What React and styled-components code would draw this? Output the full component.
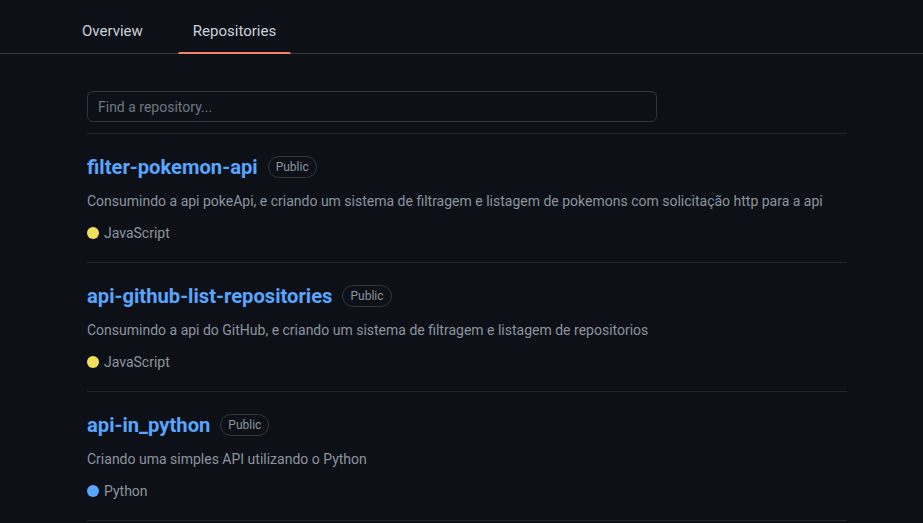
import React from "react";
import styled, { createGlobalStyle } from "styled-components";

const GlobalStyle = createGlobalStyle`
  html, body {
    margin: 0;
    padding: 0;
    background: #0d1117;
  }
  body {
    font-family: Roboto, "Liberation Sans", sans-serif;
    color: #c9d1d9;
  }
`;

const repos = [
  {
    id: 1,
    name: "filter-pokemon-api",
    desc: "Consumindo a api pokeApi, e criando um sistema de filtragem e listagem de pokemons com solicitação http para a api",
    lang: "JavaScript",
    color: "#f1e05a",
  },
  {
    id: 2,
    name: "api-github-list-repositories",
    desc: "Consumindo a api do GitHub, e criando um sistema de filtragem e listagem de repositorios",
    lang: "JavaScript",
    color: "#f1e05a",
  },
  {
    id: 3,
    name: "api-in_python",
    desc: "Criando uma simples API utilizando o Python",
    lang: "Python",
    color: "#58a6ff",
  },
];

const Page = styled.div`
  width: 923px;
  height: 523px;
  overflow: hidden;
  background: #0d1117;
`;

const TabBar = styled.nav`
  box-sizing: border-box;
  height: 54px;
  padding-top: 9px;
  border-bottom: 1px solid #30363d;
  display: flex;
  align-items: stretch;
  gap: 21px;
  padding-left: 68px;
`;

const Tab = styled.div`
  position: relative;
  display: flex;
  align-items: center;
  padding: ${(p) => (p.active ? "0 15px" : "0 14px")};
  font-size: 15px;
  color: #c9d1d9;

  &::after {
    content: "";
    display: ${(p) => (p.active ? "block" : "none")};
    position: absolute;
    left: 0;
    right: 0;
    bottom: -1px;
    height: 2px;
    border-radius: 2px 2px 0 0;
    background: #f78166;
  }
`;

const Content = styled.main`
  width: 760px;
  margin-left: 87px;
  padding-top: 37px;
`;

const Search = styled.input`
  box-sizing: border-box;
  width: 570px;
  height: 31px;
  padding: 0 10px;
  border: 1px solid #30363d;
  border-radius: 6px;
  background: #0d1117;
  color: #c9d1d9;
  font-family: inherit;
  font-size: 14px;
  outline: none;

  &::placeholder {
    color: #6e7681;
  }
`;

const List = styled.ul`
  list-style: none;
  margin: 11px 0 0;
  padding: 0;
  border-top: 1px solid #21262d;
`;

const Item = styled.li`
  padding: 22px 0 20px;
  border-bottom: 1px solid #21262d;
  height: 129px;
  box-sizing: border-box;
`;

const TitleRow = styled.div`
  display: flex;
  align-items: center;
  gap: 10px;
  height: 22px;
`;

const Name = styled.a`
  font-size: 20.2px;
  font-weight: 700;
  color: #58a6ff;
  text-decoration: none;
  line-height: 22px;
`;

const Badge = styled.span`
  box-sizing: border-box;
  height: 22px;
  display: inline-flex;
  align-items: center;
  padding: 0 7px;
  border: 1px solid #30363d;
  border-radius: 11px;
  font-size: 12px;
  color: #8b949e;
`;

const Desc = styled.p`
  margin: 13px 0 0;
  font-size: 14px;
  line-height: 21px;
  color: #8b949e;
`;

const Lang = styled.div`
  margin-top: 11px;
  display: flex;
  align-items: center;
  gap: 5px;
  font-size: 14px;
  line-height: 20px;
  color: #8b949e;
`;

const Dot = styled.span`
  width: 12px;
  height: 12px;
  border-radius: 50%;
  background: ${(p) => p.color};
`;

const App = () => {
  return (
    <Page>
      <GlobalStyle />
      <TabBar>
        <Tab>Overview</Tab>
        <Tab active>Repositories</Tab>
      </TabBar>
      <Content>
        <Search placeholder="Find a repository..." />
        <List>
          {repos.map((repo) => (
            <Item key={repo.id}>
              <TitleRow>
                <Name href="#">{repo.name}</Name>
                <Badge>Public</Badge>
              </TitleRow>
              <Desc>{repo.desc}</Desc>
              <Lang>
                <Dot color={repo.color} />
                {repo.lang}
              </Lang>
            </Item>
          ))}
        </List>
      </Content>
    </Page>
  );
};

export default App;
